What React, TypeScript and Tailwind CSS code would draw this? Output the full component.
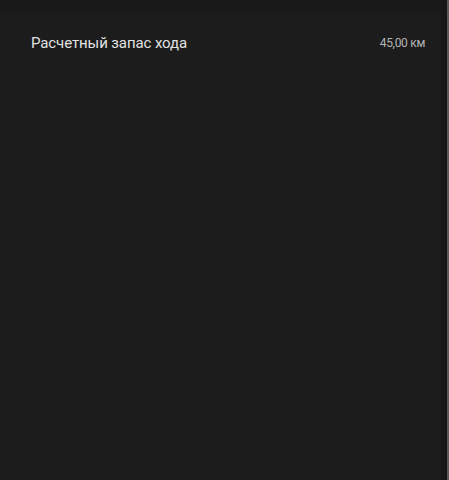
import React from 'react';

export default function App() {
  return (
    <div className="flex h-[480px] w-[449px] bg-[#1c1c1c] font-['Roboto',sans-serif]">
      <div className="flex flex-1 flex-col">
        <div className="h-[13px] bg-[#191919]" />
        <div className="flex items-center justify-between pl-[31px] pr-[16px] pt-[20px]">
          <span className="text-[15px] leading-[20px] tracking-[-0.1px] text-[#e2e2e2]">Расчетный запас хода</span>
          <span className="text-[12px] leading-[20px] tracking-[-0.3px] text-[#b4b4b4]">45,00 км</span>
        </div>
      </div>
      <div className="w-[6px] bg-[#171717]" />
      <div className="w-[2px] bg-[#5a5a5a]" />
    </div>
  );
}
